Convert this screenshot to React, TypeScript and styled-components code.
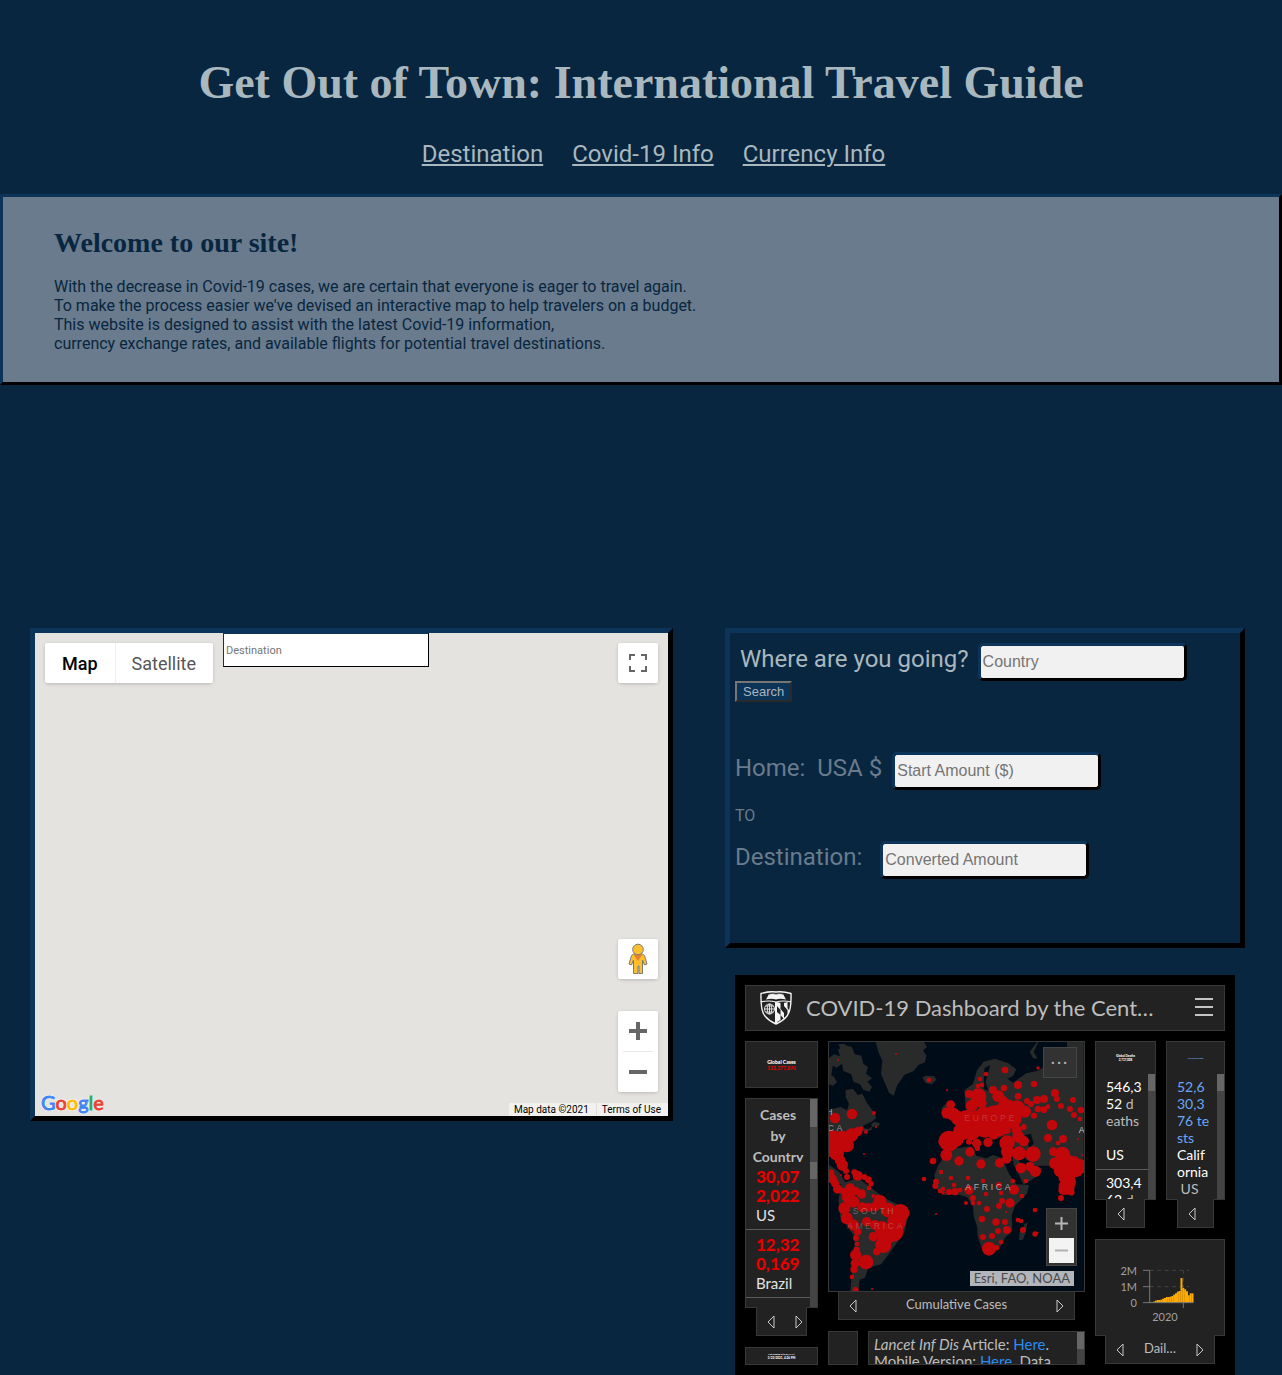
import React from "react";
import styled, { createGlobalStyle, css } from "styled-components";

const navy = "#08263f";
const edge = "#0c3358";
const pale = "#a9b7be";
const slate = "#697b8c";
const tile = "#222222";
const tileEdge = "#383838";

const raised = css`
  border-style: solid;
  border-color: ${edge} #000 #000 ${edge};
`;

const GlobalStyle = createGlobalStyle`
  *, *::before, *::after { box-sizing: border-box; }
  body {
    margin: 0;
    background: ${navy};
    color: ${pale};
    font-family: Roboto, "Liberation Sans", sans-serif;
  }
  h1, h2, h3, p, ul { margin: 0; padding: 0; }
  ul { list-style: none; }
  button { font: inherit; cursor: pointer; }
`;

/* ---------- Page header ---------- */

const Header = styled.header`
  padding: 58px 20px 26px;
  text-align: center;
`;

const SiteTitle = styled.h1`
  font-family: "Liberation Serif", serif;
  font-size: 46px;
  line-height: 50px;
  font-weight: 700;
`;

const Nav = styled.nav`
  display: flex;
  justify-content: center;
  gap: 29px;
  margin-top: 32px;
  padding-left: 25px;
`;

const NavLink = styled.a`
  color: ${pale};
  font-size: 24px;
  line-height: 28px;
`;

const Intro = styled.section`
  ${raised}
  border-width: 3px;
  padding: 30px 51px 29px;
  background: ${slate};
  color: ${navy};
`;

const IntroTitle = styled.h2`
  font-family: "Liberation Serif", serif;
  font-size: 28px;
  line-height: 32px;
  margin-bottom: 18px;
`;

const IntroText = styled.p`
  font-size: 16px;
  line-height: 19px;
`;

const Workspace = styled.main`
  display: grid;
  grid-template-columns: minmax(0, 643fr) minmax(0, 520fr);
  align-items: start;
  gap: 52px;
  margin-top: 243px;
  padding: 0 37px 0 30px;
`;

/* ---------- Google map ---------- */

const MapFrame = styled.section`
  ${raised}
  border-width: 5px;
  height: 493px;
  display: flex;
  flex-direction: column;
  justify-content: space-between;
  background: #e5e3df;
`;

const MapTop = styled.div`
  display: flex;
  align-items: flex-start;
  padding: 0 10px;
`;

const floating = css`
  background: #fff;
  border-radius: 2px;
  box-shadow: 0 1px 4px -1px rgba(0, 0, 0, 0.3);
`;

const TypeSwitch = styled.div`
  ${floating}
  display: flex;
  margin: 10px 10px 0 0;
`;

const TypeButton = styled.button<{ $active?: boolean }>`
  height: 40px;
  padding: 0 17px;
  border: 0;
  background: none;
  font-size: 18px;
  font-weight: ${(p) => (p.$active ? 500 : 400)};
  color: ${(p) => (p.$active ? "#000" : "#565656")};
  & + & {
    box-shadow: inset 1px 0 #eee;
  }
`;

const MapInput = styled.input`
  ${raised}
  border-width: 1px;
  width: 206px;
  height: 34px;
  padding: 0 2px;
  background: #fff;
  font-family: Roboto, sans-serif;
  font-size: 11px;
  &::placeholder { color: #757575; }
`;

const SquareButton = styled.button`
  ${floating}
  display: grid;
  place-items: center;
  width: 40px;
  height: 40px;
  padding: 0;
  border: 0;
`;

const FullscreenButton = styled(SquareButton)`
  margin: 10px 0 0 auto;
`;

const MapControls = styled.div`
  display: flex;
  flex-direction: column;
  align-items: flex-end;
  gap: 32px;
  margin-top: auto;
  padding: 0 10px 11px;
`;

const ZoomStack = styled.div`
  ${floating}
  display: flex;
  flex-direction: column;
  align-items: center;
`;

const ZoomButton = styled.button`
  display: grid;
  place-items: center;
  width: 40px;
  height: 40px;
  padding: 0;
  border: 0;
  background: none;
`;

const ZoomRule = styled.div`
  width: 30px;
  height: 1px;
  background: #e6e6e6;
`;

const MapBottom = styled.div`
  display: flex;
  align-items: flex-end;
  justify-content: space-between;
  height: 13px;
`;

const GoogleLogo = styled.a`
  padding-left: 6px;
  font-family: Lato, sans-serif;
  font-size: 20px;
  line-height: 28px;
  text-decoration: none;
  text-shadow: 1px 0 1px #fff, -1px 0 1px #fff, 0 1px 1px #fff, 0 -1px 1px #fff;
`;

const Letter = styled.span<{ $color: string }>`
  color: ${(p) => p.$color};
  -webkit-text-stroke: 1px ${(p) => p.$color};
`;

const Credits = styled.div`
  display: flex;
  background: #f2f1ef;
  color: #000;
  font-size: 10px;
  line-height: 13px;
`;

const Credit = styled.span`
  padding: 0 7px 0 5px;
  & + & { border-left: 1px solid #e0deda; }
`;

/* ---------- Currency form ---------- */

const SideColumn = styled.div`
  display: flex;
  flex-direction: column;
  gap: 27px;
`;

const CurrencyBox = styled.form`
  ${raised}
  border-width: 5px;
  min-height: 320px;
  padding: 10px 5px;
`;

const Field = styled.div<{ $gap: number; $top?: number; $left?: number }>`
  display: flex;
  gap: ${(p) => p.$gap}px;
  margin-top: ${(p) => p.$top ?? 0}px;
  padding-left: ${(p) => p.$left ?? 0}px;
`;

const FieldLabel = styled.label<{ $color: string }>`
  color: ${(p) => p.$color};
  font-size: 24px;
  line-height: 32px;
  white-space: nowrap;
`;

const FieldInput = styled.input`
  ${raised}
  border-width: 3px;
  border-radius: 5px;
  width: 209px;
  height: 38px;
  padding: 0 2px;
  background: #f1f1f1;
  font-family: "Liberation Sans", sans-serif;
  font-size: 16px;
  &::placeholder { color: #757575; }
`;

const SearchButton = styled.button`
  display: block;
  height: 21px;
  padding: 0 6px;
  border: 2px solid;
  border-color: #767676 #2a2a2a #2a2a2a #767676;
  background: ${edge};
  color: ${pale};
  font-family: "Liberation Sans", sans-serif;
  font-size: 13px;
  line-height: 16px;
`;

const To = styled.p`
  margin: 16px 0 15px;
  color: ${slate};
  font-size: 16px;
  line-height: 20px;
`;

/* ---------- Covid dashboard ---------- */

const Dashboard = styled.section`
  display: flex;
  flex-direction: column;
  gap: 10px;
  height: 400px;
  margin: 0 10px;
  padding: 10px;
  background: #000;
  color: #bdbdbd;
  font-family: Lato, "Open Sans", sans-serif;
`;

const Tile = styled.div<{ $grow?: boolean; $height?: number }>`
  flex: ${(p) => (p.$grow ? "1 1 0" : "0 0 auto")};
  min-height: 0;
  height: ${(p) => (p.$height ? `${p.$height}px` : "auto")};
  background: ${tile};
  border: 1px solid ${tileEdge};
  overflow: hidden;
`;

const DashHeader = styled.div`
  display: flex;
  align-items: center;
  height: 46px;
  padding: 0 11px 0 14px;
  background: ${tile};
  border: 1px solid ${tileEdge};
`;

const DashTitle = styled.h2`
  flex: 1;
  margin-left: 14px;
  font-size: 22px;
  line-height: 30px;
  font-weight: 400;
  white-space: nowrap;
`;

const MenuButton = styled.button`
  display: flex;
  flex-direction: column;
  gap: 6px;
  width: 18px;
  padding: 0;
  margin-bottom: 2px;
  border: 0;
  background: none;
  span { height: 2px; background: #c4c4c4; }
`;

const DashGrid = styled.div`
  flex: 1;
  min-height: 0;
  display: grid;
  grid-template-columns: 73px minmax(0, 1fr) 130px;
  gap: 10px;
`;

const Column = styled.div`
  display: flex;
  flex-direction: column;
  min-width: 0;
  min-height: 0;
`;

const ChartColumn = styled(Column)`
  padding-bottom: 1px;
`;

const Centered = styled(Tile)`
  display: flex;
  flex-direction: column;
  align-items: center;
  justify-content: center;
`;

const Tiny = styled.span<{ $color?: string; $size: number }>`
  color: ${(p) => p.$color ?? "#fff"};
  font-size: ${(p) => p.$size}px;
  line-height: ${(p) => p.$size + 1}px;
  font-weight: 900;
  white-space: nowrap;
`;

const TinyTitle = styled.div`
  display: flex;
  flex-direction: column;
  align-items: center;
  justify-content: center;
  height: 32px;
`;

const Tab = styled.div<{ $compact?: boolean }>`
  display: flex;
  align-items: center;
  justify-content: ${(p) => (p.$compact ? "flex-start" : "space-between")};
  height: 29px;
  margin: -1px 11px 0;
  padding: 0 ${(p) => (p.$compact ? 0 : 3)}px 0 10px;
  background: ${tile};
  border: 1px solid ${tileEdge};
  border-top-color: ${tile};
`;

const WideTab = styled(Tab)`
  margin: -1px 10px 0;
  padding: 0 10px;
`;

const TabText = styled.span`
  padding-bottom: 3px;
  font-size: 13px;
  line-height: 16px;
`;

const ArrowButton = styled.button`
  display: flex;
  padding: 0;
  border: 0;
  background: none;
`;

const Scroller = styled.div<{ $height?: number }>`
  display: flex;
  height: ${(p) => (p.$height ? `${p.$height}px` : "auto")};
  flex: ${(p) => (p.$height ? "none" : "1")};
  min-height: 0;
  overflow: hidden;
`;

const ScrollBody = styled.div`
  flex: 1;
  min-width: 0;
  overflow: hidden;
`;

const ScrollTrack = styled.div`
  width: 7px;
  background: #444;
`;

const ScrollThumb = styled.div<{ $height: number }>`
  height: ${(p) => p.$height}px;
  background: #666;
`;

const ListTile = styled(Tile)`
  display: flex;
  flex-direction: column;
`;

const CountryTitle = styled.h3`
  padding-top: 5px;
  font-size: 14px;
  line-height: 21px;
  font-weight: 700;
  text-align: center;
`;

const CountryRow = styled.li`
  padding: 5px 0 4px 10px;
  border-bottom: 1px solid #5a5a5a;
  color: #e2e2e2;
  font-size: 15px;
  line-height: 20px;
  white-space: nowrap;
`;

const CaseCount = styled.strong`
  display: block;
  color: #e60000;
  font-size: 17px;
  line-height: 19px;
  font-weight: 900;
`;

const StatRow = styled.li`
  padding: 4px 0 6px 10px;
  border-bottom: 1px solid #5a5a5a;
  font-size: 14px;
  line-height: 17px;
  color: #bdbdbd;
  white-space: nowrap;
`;

const Tone = styled.span<{ $color: string }>`
  color: ${(p) => p.$color};
`;

const PairRow = styled.div<{ $grow?: boolean; $columns: string }>`
  display: grid;
  grid-template-columns: ${(p) => p.$columns};
  gap: 10px;
  flex: ${(p) => (p.$grow ? "1 1 0" : "none")};
  min-height: 0;
`;

const MapTile = styled(Tile)`
  position: relative;
  background: #000d18;
  svg { display: block; }
`;

const MapMenu = styled.button`
  position: absolute;
  top: 5px;
  right: 7px;
  width: 34px;
  height: 31px;
  padding: 0 0 4px;
  background: #323232;
  border: 1px solid #454545;
  color: #b0b0b0;
  font-size: 16px;
  letter-spacing: 2px;
`;

const MapZoom = styled.div`
  position: absolute;
  right: 7px;
  bottom: 25px;
  display: flex;
  flex-direction: column;
  align-items: center;
  width: 31px;
  height: 58px;
  background: #323232;
  border: 1px solid #454545;
`;

const MapZoomButton = styled.button<{ $light?: boolean }>`
  display: grid;
  place-items: center;
  width: 25px;
  height: ${(p) => (p.$light ? 25 : 29)}px;
  padding: 0;
  border: 0;
  background: ${(p) => (p.$light ? "#f3f3f3" : "transparent")};
`;

const MapCredit = styled.div`
  position: absolute;
  right: 10px;
  bottom: 5px;
  padding: 0 4px;
  background: #b2b5ba;
  color: #4a4a4a;
  font-size: 13px;
  line-height: 15px;
`;

const Notes = styled.p`
  padding: 4px 0 0 5px;
  font-size: 15px;
  line-height: 17px;
  white-space: nowrap;
`;

const NoteLink = styled.a`
  color: #2a8cf0;
  text-decoration: none;
`;

const Spacer = styled.div<{ $size: number }>`
  flex: none;
  height: ${(p) => p.$size}px;
`;

/* ---------- Drawings ---------- */

const Arrow = ({ left, label }: { left?: boolean; label: string }) => (
  <ArrowButton type="button" aria-label={label}>
    <svg width="8" height="14" viewBox="0 0 8 14" fill="none" stroke="#c8c8c8">
      <path d={left ? "M7 1v12L1 7z" : "M1 1v12l6-6z"} />
    </svg>
  </ArrowButton>
);

const Shield = () => (
  <svg width="32" height="34" viewBox="0 0 32 34" aria-hidden="true">
    <path d="M1 2.500Q9 0 16 1q7-1 15 1.500Q31.500 20 27 25q-4 5-11 8Q9 30 5 25 .5 20 1 2.500z" fill="#222" stroke="#f4f4f4" strokeWidth="1.400" />
    <path d="M1 11Q8 9 16 11q8-2 15 0" fill="none" stroke="#f4f4f4" strokeWidth="1.200" />
    <path d="M6 8.500 9 3q4-1.500 7 0 3-1.500 7 0l3 5.500q-6-1.500-10 0-4-1.500-10 0z" fill="#f4f4f4" />
    <path d="M9 3q4-1 7 0 3-1 7 0" stroke="#222" fill="none" strokeWidth=".7" />
    <path d="M16 11v22" stroke="#f4f4f4" strokeWidth="2" />
    <g fill="none" stroke="#e2e2e2" strokeWidth="1">
      <circle cx="9.500" cy="18" r="5" />
      <ellipse cx="9.500" cy="18" rx="2.200" ry="5" />
      <path d="M4.500 18h10M5.500 15h8M5.500 21h8M9.500 13v10" />
    </g>
    <path d="M17 11l3.500 1v7L17 15zM20.500 18l3.500 4v6l-3.500-4zM24 12l3.500-1v8L24 15zM17 21l3.500 3v5L17 31zM27.500 17l2 3-2 5z" fill="#f4f4f4" />
  </svg>
);

const Pegman = () => (
  <svg width="20" height="32" viewBox="0 0 20 32" aria-hidden="true">
    <path d="M5.500 11h9l2 1.500 2.500 8.500-2.500 1-2-5v13.500H11V23h-1v7.500H5.500V17l-2 5-2.500-1 2.500-8.500z" fill="#fdbf2d" stroke="#7b7b76" strokeWidth="1" />
    <path d="M5.500 11.500h9L10 18z" fill="#e8812c" />
    <circle cx="10" cy="6.500" r="5.300" fill="#fdbf2d" stroke="#7b7b76" strokeWidth="1" />
  </svg>
);

// Bubbles are stored as [x, y, radius] on the 765 x 747 map canvas.
const bubbles: number[][] = [
  [39, 75, 3], [213, 57, 3], [312, 135, 7], [366, 165, 3], [30, 249, 16], [81, 237, 16], [147, 234, 6], [153, 276, 3],
  [117, 357, 3], [123, 291, 6], [297, 432, 7], [324, 378, 10], [483, 117, 7], [465, 132, 7], [540, 105, 10], [639, 99, 5],
  [459, 153, 7], [471, 150, 7], [432, 177, 12], [504, 165, 12], [537, 159, 10], [579, 150, 12], [627, 147, 10],
  [690, 174, 12], [696, 192, 9], [708, 213, 9], [744, 195, 9], [735, 222, 9], [747, 240, 9], [768, 225, 10], [765, 252, 7],
  [579, 184, 10], [606, 198, 9], [618, 207, 9], [636, 195, 12], [657, 192, 12], [639, 222, 10], [657, 224, 10], [669, 215, 7],
  [627, 242, 9], [681, 270, 16], [669, 309, 12], [714, 312, 12], [699, 324, 7], [759, 312, 3], [771, 360, 3],
  [460, 184, 24], [520, 184, 18], [440, 212, 18], [470, 205, 15], [535, 195, 12], [377, 209, 13], [366, 234, 17], [385, 238, 20], [400, 250, 22],
  [425, 255, 30], [450, 260, 32], [480, 250, 34], [510, 245, 34], [545, 225, 32], [575, 222, 26], [600, 230, 18], [560, 250, 30],
  [520, 275, 30], [480, 280, 28], [440, 290, 26], [410, 290, 26], [372, 318, 31], [355, 320, 15], [395, 315, 20], [364, 360, 18], [402, 378, 14], [435, 351, 14],
  [468, 387, 14], [455, 325, 14], [457, 340, 8], [432, 320, 9], [489, 322, 14], [505, 300, 14], [545, 285, 12], [575, 285, 15], [596, 276, 9],
  [546, 324, 23], [580, 305, 18], [596, 318, 16], [548, 350, 20], [582, 355, 21], [624, 357, 23], [545, 372, 14], [524, 384, 14],
  [588, 399, 16], [615, 395, 14], [631, 409, 17], [563, 438, 7], [603, 438, 7], [567, 464, 15], [591, 483, 7],
  [348, 411, 7], [378, 429, 7], [387, 450, 7], [429, 429, 7], [474, 438, 7], [333, 440, 9], [331, 453, 9], [345, 468, 7], [354, 462, 7],
  [354, 474, 5], [372, 471, 9], [390, 470, 11], [405, 465, 7], [432, 465, 14], [483, 477, 7], [444, 489, 9], [444, 504, 7],
  [462, 504, 7], [423, 504, 6], [486, 522, 9], [522, 450, 9], [528, 474, 7], [531, 498, 9], [522, 513, 9], [555, 504, 14],
  [543, 531, 3], [630, 525, 7], [471, 552, 10], [513, 561, 11], [540, 561, 9], [519, 588, 9], [546, 585, 12], [474, 606, 9],
  [501, 603, 9], [528, 621, 7], [492, 641, 21], [515, 638, 8], [579, 555, 7], [588, 558, 7], [594, 585, 9], [630, 597, 8], [638, 593, 3],
  [708, 489, 9], [685, 350, 13], [712, 358, 23], [690, 385, 18], [720, 390, 34], [745, 385, 22], [765, 395, 22], [708, 405, 22],
  [725, 425, 25], [725, 455, 24], [715, 465, 15], [739, 472, 10], [755, 408, 18], [733, 440, 20],
  [20, 315, 30], [25, 335, 32], [50, 315, 28], [80, 300, 20], [98, 290, 14], [108, 281, 7], [65, 330, 22], [35, 355, 22], [45, 375, 16],
  [52, 390, 17], [63, 408, 9], [66, 426, 9], [48, 420, 3], [16, 415, 12], [22, 432, 14], [30, 445, 12], [38, 462, 14], [55, 468, 10],
  [88, 412, 9], [98, 422, 15], [118, 426, 9], [130, 434, 10], [138, 446, 8], [132, 459, 7], [75, 460, 15], [70, 485, 20], [92, 468, 12],
  [110, 477, 14], [145, 483, 6], [158, 487, 8], [168, 490, 8], [58, 520, 18], [85, 500, 18], [112, 517, 15], [130, 517, 13], [165, 500, 20],
  [150, 515, 14], [65, 550, 18], [85, 570, 17], [190, 525, 22], [226, 534, 27], [215, 560, 28], [205, 590, 30], [185, 600, 28], [175, 630, 24],
  [145, 605, 14], [155, 650, 11], [125, 560, 14], [150, 570, 15], [170, 580, 22], [98, 590, 11], [93, 609, 9], [96, 627, 7],
  [95, 645, 10], [92, 660, 17], [90, 685, 13], [87, 703, 11], [123, 681, 22], [81, 726, 7], [92, 765, 9], [141, 762, 3], [333, 537, 3],
];

const WorldMap = () => (
  <svg width="100%" height="249" viewBox="12 21 765 747" preserveAspectRatio="xMidYMid slice" role="img" aria-label="World map of cases">
    <g fill="#292a2a">
      <path d="M12 70l15-12 18 6-6-20 20-14 22 6 8 22 20 4 6 24 14 10-6 20 18 14-14 10 14 16-8 14-18-6-10-16-20-8-6-22-24-10-4-22-16 12-12-6-4 30-7 4z" />
      <path d="M12 120l14 4 10 18-12 10-12-4zM40 28l20-2 4 12-16 6z" />
      <path d="M152 21l8 30 12 26-4 40 14 32 10 24 14 9 10-30 22-32 28-12 14-18 20-8 4-20-10-16 12-10-8-14V21z" />
      <path d="M292 128l10-6 26 2 6 10-14 14-18-4z" />
      <path d="M62 165l22-3 14 18 14-4 14 28 18 24 10 20-14 12-26 12 10 16-20 2-16 22-76 12V224l36-8 18 10 6-20-10-20z" />
      <path d="M138 268l10-8 16 4-2 10-20 2zM118 280l14 2 8-8v10l-18 6z" />
      <path d="M420 190l-2-24 26-20 12-40 20-26 34-9 40 14 24 18-10 20-16 8 16 12 40-28 34-8 20-12 18 8 50-40V21h50v371H632l-30-20-40-40-50-20-30-40-60-50z" />
      <path d="M636 21l-22 30 10 18 14 2-12-20 14-30zM350 220l20-22 20 8-8 36-28 8z" />
      <path d="M340 390l36-48 64-8 14 28 30 8 20-10 28 10 20 46 22 32 38 2-6 26-36 36-10 30 2 46-22 20-10 22-20 22-24 4-14-12-14-40-2-30-10-30-2-30-18-28-30-8-36 2-28-20-4-40z" />
      <path d="M598 568l10-6-6 30-8 22-12 2 2-24 12-16zM560 345l40 60 52-6-10 22-46 28-30-60z" />
      <path d="M50 445l50-15 80 60 74 36-16 66-50 70-20 26-38 10-10 30-16 6-4 34H76l6-66 8-96-44-60-6-50z" />
      <path d="M12 400l30 50 20-6-20-34-30-20z" />
    </g>
    <path d="M510 315l24-12 30 10-8 14-30 4zM600 300l18-4 8 30-12 12-10-20zM478 100l18-10-14 50 8 28-14-6zM552 380l34 60-8 2-30-54z" fill="#000d18" />
    <g fill="#c2070a">
      {bubbles.map(([x, y, r], i) => (
        <circle key={i} cx={x} cy={y} r={r} />
      ))}
    </g>
    <g fontFamily="Liberation Sans, sans-serif" fontSize="26" letterSpacing="8" fill="#c9c9c9">
      <text x="418" y="258" fillOpacity=".25">EUROPE</text>
      <text x="421" y="465" fillOpacity=".8">AFRICA</text>
      <text x="83" y="536" fillOpacity=".4">SOUTH</text>
      <text x="66" y="582" fillOpacity=".3">AMERICA</text>
      <text x="4" y="240" fillOpacity=".8">H</text>
      <text x="8" y="288" fillOpacity=".7">CA</text>
      <text x="761" y="294">A</text>
    </g>
  </svg>
);

const dailyBars = [2, 2, 3, 6, 8, 8, 9, 12, 14, 17, 17, 18, 20, 24, 28, 33, 35, 74, 44, 40, 34, 22, 28, 28];

const DailyChart = () => (
  <svg width="128" height="95" viewBox="33 150 384 285" role="img" aria-label="Daily cases chart">
    <g stroke="#444" strokeWidth="3" strokeDasharray="12 10">
      <path d="M195 241h117M195 290h117M295 241v96" />
    </g>
    <g fill="#ffaa00">
      {dailyBars.map((h, i) => (
        <rect key={i} x={193 + i * 5.5} y={338 - h} width="6" height={h} />
      ))}
    </g>
    <path d="M174 241h20M174 290h20M174 338h150M194 241v97M295 338v16" stroke="#777" strokeWidth="3" fill="none" />
    <g fontFamily="Lato, sans-serif" fontSize="33" fill="#a0a0a0">
      <text x="156" y="255" textAnchor="end">2M</text>
      <text x="156" y="303" textAnchor="end">1M</text>
      <text x="156" y="351" textAnchor="end">0</text>
      <text x="240" y="393" textAnchor="middle">2020</text>
    </g>
  </svg>
);

const Bar = ({ thumb }: { thumb: number }) => (
  <ScrollTrack>
    <ScrollThumb $height={thumb} />
  </ScrollTrack>
);

const logo: [string, string][] = [
  ["G", "#4285f4"], ["o", "#ea4335"], ["o", "#fbbc05"], ["g", "#4285f4"], ["l", "#34a853"], ["e", "#ea4335"],
];

const countries = [
  { first: "30,07", second: "2,022", name: "US" },
  { first: "12,32", second: "0,169", name: "Brazil" },
];

/* ---------- Sections ---------- */

const GoogleMap = () => (
  <MapFrame id="destination">
    <MapTop>
      <TypeSwitch>
        <TypeButton type="button" $active>Map</TypeButton>
        <TypeButton type="button">Satellite</TypeButton>
      </TypeSwitch>
      <MapInput aria-label="Destination" placeholder="Destination" />
      <FullscreenButton type="button" aria-label="Toggle fullscreen">
        <svg width="18" height="18" fill="none" stroke="#666" strokeWidth="2">
          <path d="M1 6V1h5M12 1h5v5M17 12v5h-5M6 17H1v-5" />
        </svg>
      </FullscreenButton>
    </MapTop>
    <MapControls>
      <SquareButton type="button" aria-label="Street View"><Pegman /></SquareButton>
      <ZoomStack>
        <ZoomButton type="button" aria-label="Zoom in">
          <svg width="18" height="18" stroke="#666" strokeWidth="4"><path d="M0 9h18M9 0v18" /></svg>
        </ZoomButton>
        <ZoomRule />
        <ZoomButton type="button" aria-label="Zoom out">
          <svg width="18" height="18" stroke="#666" strokeWidth="4"><path d="M0 9h18" /></svg>
        </ZoomButton>
      </ZoomStack>
    </MapControls>
    <MapBottom>
      <GoogleLogo href="#google">
        {logo.map(([char, color], i) => (
          <Letter key={i} $color={color}>{char}</Letter>
        ))}
      </GoogleLogo>
      <Credits>
        <Credit>Map data ©2021</Credit>
        <Credit>Terms of Use</Credit>
      </Credits>
    </MapBottom>
  </MapFrame>
);

const CurrencyForm = () => (
  <CurrencyBox id="currency" onSubmit={(e) => e.preventDefault()}>
    <Field $gap={9} $left={5}>
      <FieldLabel htmlFor="country" $color={pale}>Where are you going?</FieldLabel>
      <FieldInput id="country" placeholder="Country" />
    </Field>
    <SearchButton type="submit">Search</SearchButton>
    <Field $gap={10} $top={50}>
      <FieldLabel htmlFor="start" $color={slate}>Home:&nbsp; USA $</FieldLabel>
      <FieldInput id="start" placeholder="Start Amount ($)" />
    </Field>
    <To>TO</To>
    <Field $gap={18}>
      <FieldLabel htmlFor="converted" $color={slate}>Destination:</FieldLabel>
      <FieldInput id="converted" placeholder="Converted Amount" />
    </Field>
  </CurrencyBox>
);

const CovidDashboard = () => (
  <Dashboard id="covid">
    <DashHeader>
      <Shield />
      <DashTitle>COVID-19 Dashboard by the Cent…</DashTitle>
      <MenuButton type="button" aria-label="Menu"><span /><span /><span /></MenuButton>
    </DashHeader>
    <DashGrid>
      <Column>
        <Centered $height={47}>
          <Tiny $size={5}>Global Cases</Tiny>
          <Tiny $size={5} $color="#e60000">123,377,890</Tiny>
        </Centered>
        <Spacer $size={10} />
        <ListTile $grow>
          <Scroller $height={63}>
            <ScrollBody>
              <CountryTitle>Cases<br />by<br />Country</CountryTitle>
            </ScrollBody>
            <Bar thumb={28} />
          </Scroller>
          <Scroller>
            <ScrollBody as="ul">
              {countries.map((c) => (
                <CountryRow key={c.name}>
                  <CaseCount>{c.first}<br />{c.second}</CaseCount>
                  {c.name}
                </CountryRow>
              ))}
            </ScrollBody>
            <Bar thumb={17} />
          </Scroller>
        </ListTile>
        <Tab>
          <Arrow left label="Previous list" />
          <Arrow label="Next list" />
        </Tab>
        <Spacer $size={11} />
        <Centered $height={18}>
          <Tiny $size={2}>Last Updated at (M/D/YYYY)</Tiny>
          <Tiny $size={3}>3/22/2021, 4:26 PM</Tiny>
        </Centered>
      </Column>

      <Column>
        <MapTile $grow>
          <WorldMap />
          <MapMenu type="button" aria-label="Map options">···</MapMenu>
          <MapZoom>
            <MapZoomButton type="button" aria-label="Zoom in">
              <svg width="13" height="13" stroke="#b5b5b5" strokeWidth="2"><path d="M0 6.500h13M6.500 0v13" /></svg>
            </MapZoomButton>
            <MapZoomButton type="button" aria-label="Zoom out" $light>
              <svg width="13" height="13" stroke="#b0b0b0" strokeWidth="2"><path d="M0 6.500h13" /></svg>
            </MapZoomButton>
          </MapZoom>
          <MapCredit>Esri, FAO, NOAA</MapCredit>
        </MapTile>
        <WideTab>
          <Arrow left label="Previous map" />
          <TabText>Cumulative Cases</TabText>
          <Arrow label="Next map" />
        </WideTab>
        <Spacer $size={11} />
        <PairRow $columns="30px minmax(0, 1fr)">
          <Tile $height={34} />
          <Tile $height={34}>
            <Scroller $height={32}>
              <ScrollBody>
                <Notes>
                  <em>Lancet Inf Dis</em> Article: <NoteLink href="#article">Here</NoteLink>.<br />
                  Mobile Version: <NoteLink href="#mobile">Here</NoteLink>. Data
                </Notes>
              </ScrollBody>
              <Bar thumb={17} />
            </Scroller>
          </Tile>
        </PairRow>
      </Column>

      <ChartColumn>
        <PairRow $grow $columns="61fr 59fr">
          <Column>
            <ListTile $grow>
              <TinyTitle>
                <Tiny $size={3}>Global Deaths</Tiny>
                <Tiny $size={3}>2,717,008</Tiny>
              </TinyTitle>
              <Scroller>
                <ScrollBody as="ul">
                  <StatRow>
                    <Tone $color="#fff">546,3<br />52</Tone> d<br />eaths<br /><br />
                    <Tone $color="#fff">US</Tone>
                  </StatRow>
                  <StatRow>
                    <Tone $color="#fff">303,4<br />62</Tone> d
                  </StatRow>
                </ScrollBody>
                <Bar thumb={17} />
              </Scroller>
            </ListTile>
            <Tab $compact><Arrow left label="Previous deaths list" /></Tab>
          </Column>
          <Column>
            <ListTile $grow>
              <TinyTitle>
                <Tiny $size={2} $color="#79aef2">US People Tested</Tiny>
              </TinyTitle>
              <Scroller>
                <ScrollBody as="ul">
                  <StatRow>
                    <Tone $color="#69a6f8">52,6<br />30,3<br />76 te<br />sts</Tone><br />
                    <Tone $color="#fff">Calif<br />ornia</Tone><br />
                    &nbsp;US
                  </StatRow>
                </ScrollBody>
                <Bar thumb={17} />
              </Scroller>
            </ListTile>
            <Tab $compact><Arrow left label="Previous tests list" /></Tab>
          </Column>
        </PairRow>
        <Spacer $size={11} />
        <Tile $height={97}><DailyChart /></Tile>
        <WideTab>
          <Arrow left label="Previous chart" />
          <TabText>Dail…</TabText>
          <Arrow label="Next chart" />
        </WideTab>
      </ChartColumn>
    </DashGrid>
  </Dashboard>
);

export default function App() {
  return (
    <>
      <GlobalStyle />
      <Header>
        <SiteTitle>Get Out of Town: International Travel Guide</SiteTitle>
        <Nav>
          <NavLink href="#destination">Destination</NavLink>
          <NavLink href="#covid">Covid-19 Info</NavLink>
          <NavLink href="#currency">Currency Info</NavLink>
        </Nav>
      </Header>
      <Intro>
        <IntroTitle>Welcome to our site!</IntroTitle>
        <IntroText>
          With the decrease in Covid-19 cases, we are certain that everyone is eager to travel again.<br />
          To make the process easier we've devised an interactive map to help travelers on a budget.<br />
          This website is designed to assist with the latest Covid-19 information,<br />
          currency exchange rates, and available flights for potential travel destinations.
        </IntroText>
      </Intro>
      <Workspace>
        <GoogleMap />
        <SideColumn>
          <CurrencyForm />
          <CovidDashboard />
        </SideColumn>
      </Workspace>
    </>
  );
}
